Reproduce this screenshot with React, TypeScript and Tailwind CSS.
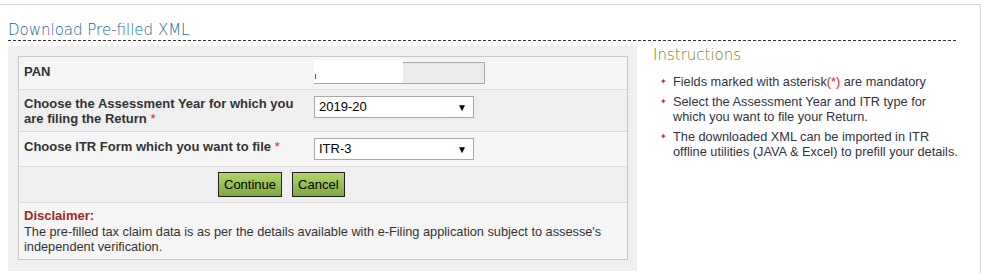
const labelCls = "text-[13px] font-bold leading-[15px] text-[#333]";

function Star() {
  return <span className="inline-block text-[#d22] font-normal">*</span>;
}

function SelectBox({ value }: { value: string }) {
  return (
    <div className="flex h-[22px] w-[160px] items-center justify-between border border-[#a9a9a9] bg-white pl-[4px] pr-[6px] text-[13px] text-black">
      <span>{value}</span>
      <span className="text-[10px]">▼</span>
    </div>
  );
}

export default function App() {
  return (
    <div className="h-[274px] w-[981px] bg-white pt-[4px] font-['Liberation_Sans',Arial,sans-serif]">
      <div className="h-[270px] border-t border-r border-[#d6d6d6] pl-[8px]">
        <h2 className="mt-[15px] w-[948px] border-b border-dashed border-[#333] font-['DejaVu_Sans',sans-serif] text-[15px] font-light leading-[20px] text-[#1d6396]">
          Download Pre-filled XML
        </h2>

        <div className="mt-[5px] flex gap-[16px]">
          {/* form panel */}
          <div className="w-[629px] bg-[#efefef] pt-[10px] pr-[9px] pb-[11px] pl-[10px]">
            <div className="border border-[#c9c9c9] bg-[#f5f5f5]">
              <div className="grid h-[33px] grid-cols-[295px_1fr] border-b border-[#dcdcdc] bg-[#f5f5f5]">
                <div className={`${labelCls} pl-[5px] pt-[7px]`}>PAN</div>
                <div className="pt-[5px]">
                  <div className="flex h-[22px] w-[171px] border border-[#a9a9a9] bg-[#ebebeb]">
                    <div className="-mt-[3px] -ml-px flex h-[23px] w-[89px] items-end bg-white pb-[4px] pl-[1px]">
                      <div className="h-[5px] w-px bg-[#555]" />
                    </div>
                  </div>
                </div>
              </div>

              <div className="grid h-[42px] grid-cols-[295px_1fr] border-b border-[#dcdcdc] bg-[#efefef]">
                <div className={`${labelCls} pl-[5px] pt-[6px]`}>
                  Choose the Assessment Year for which you are filing the Return <Star />
                </div>
                <div className="pt-[6px]">
                  <SelectBox value="2019-20" />
                </div>
              </div>

              <div className="grid h-[35px] grid-cols-[295px_1fr] border-b border-[#dcdcdc] bg-[#f5f5f5]">
                <div className={`${labelCls} pl-[5px] pt-[7px]`}>
                  Choose ITR Form which you want to file <Star />
                </div>
                <div className="pt-[6px]">
                  <SelectBox value="ITR-3" />
                </div>
              </div>

              <div className="flex h-[36px] items-center gap-[10px] border-b border-[#dcdcdc] bg-[#efefef] pl-[199px]">
                <button className="h-[25px] border border-[#222] bg-gradient-to-b from-[#b2d66a] to-[#7fa83e] px-[5px] text-[13px] text-black">
                  Continue
                </button>
                <button className="h-[25px] border border-[#222] bg-gradient-to-b from-[#b2d66a] to-[#7fa83e] px-[5px] text-[13px] text-black">
                  Cancel
                </button>
              </div>

              <div className="h-[56px] bg-[#f5f5f5] pl-[5px] pt-[5px]">
                <div className="text-[13px] font-bold leading-[16px] text-[#9b2a1e]">Disclaimer:</div>
                <p className="pr-[8px] text-[12.75px] leading-[15px] text-[#333]">
                  The pre-filled tax claim data is as per the details available with e-Filing application subject to assesse's independent verification.
                </p>
              </div>
            </div>
          </div>

          {/* instructions */}
          <div className="w-[310px]">
            <h3 className="font-['DejaVu_Sans',sans-serif] text-[15px] font-light leading-[18px] text-[#6f8420]">
              Instructions
            </h3>
            <ul className="mt-[10px] flex flex-col gap-[5px] text-[12.75px] leading-[15px] text-[#333344]">
              <li className="flex">
                <span className="w-[20px] shrink-0 pl-[7px] text-[8px] text-[#a33]">✦</span>
                <span className="w-[289px]">
                  Fields marked with asterisk<span className="text-[#d22]">(*)</span> are mandatory
                </span>
              </li>
              <li className="flex">
                <span className="w-[20px] shrink-0 pl-[7px] text-[8px] text-[#a33]">✦</span>
                <span className="w-[289px]">Select the Assessment Year and ITR type for which you want to file your Return.</span>
              </li>
              <li className="flex">
                <span className="w-[20px] shrink-0 pl-[7px] text-[8px] text-[#a33]">✦</span>
                <span className="w-[289px]">
                  The downloaded XML can be imported in ITR offline utilities (JAVA &amp; Excel) to prefill your details.
                </span>
              </li>
            </ul>
          </div>
        </div>
      </div>
    </div>
  );
}
